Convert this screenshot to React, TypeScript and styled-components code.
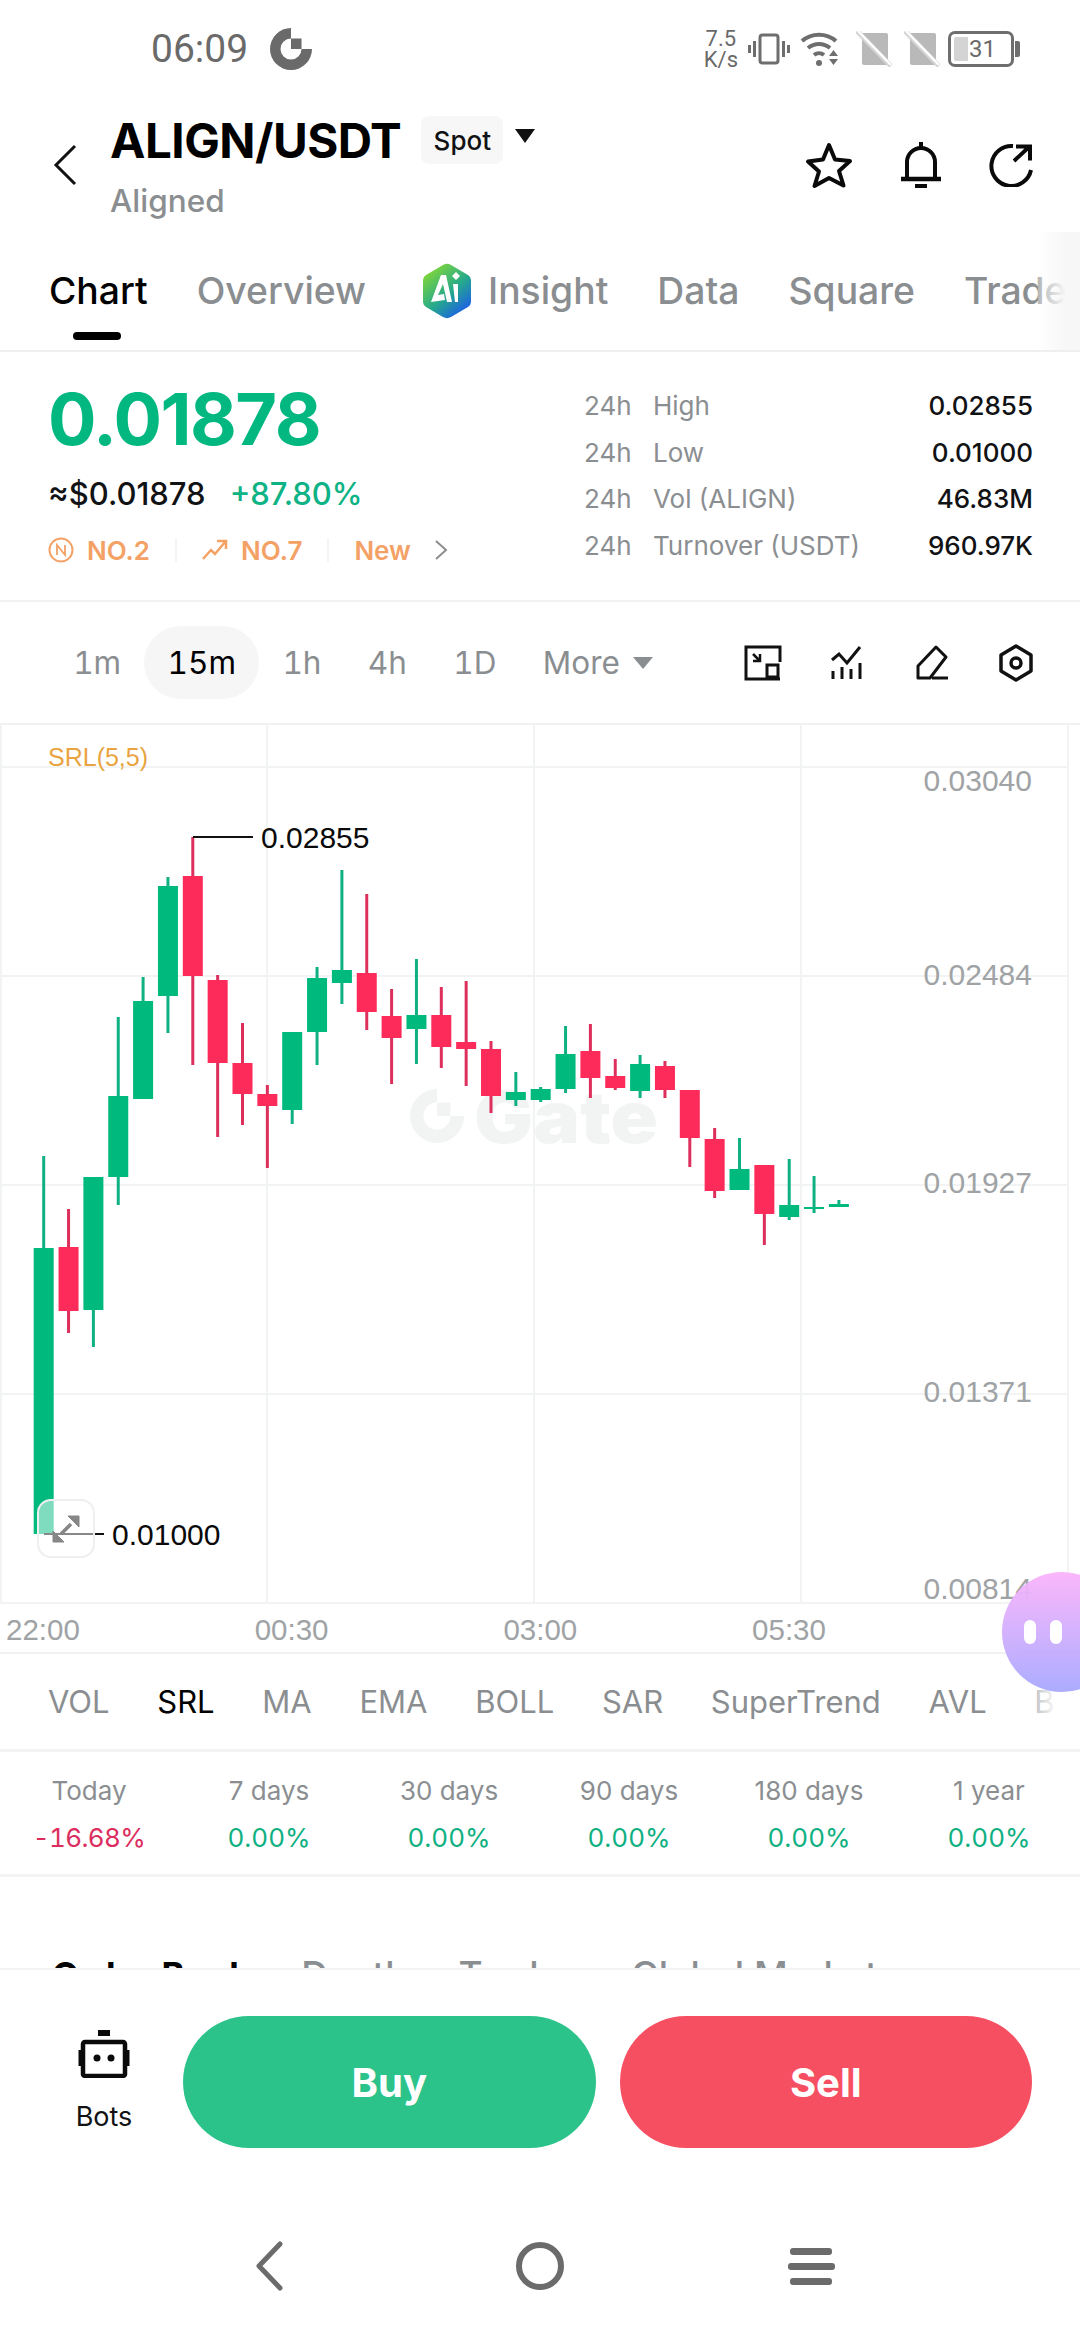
import { ReactElement } from "react";
import styled, { createGlobalStyle } from "styled-components";

const UI_FONT = `Inter, "Liberation Sans", sans-serif`;
const CHART_FONT = `"Liberation Sans", Arial, sans-serif`;

const TEXT = "#111214";
const GREY = "#8b8e91";
const GREEN = "#00b97c";
const RED = "#fc2b5a";
const ORANGE = "#f4a166";
const LINE = "#f2f3f3";

// [high, bodyTop, bodyBottom, low, up?] in page pixels, read off the screenshot
type Candle = [number, number, number, number, boolean];
const CANDLES: Candle[] = [
  [1156, 1248, 1534, 1534, true],
  [1209, 1247, 1311, 1333, false],
  [1177, 1177, 1310, 1347, true],
  [1017, 1096, 1177, 1205, true],
  [977, 1001, 1099, 1099, true],
  [877, 886, 996, 1033, true],
  [837, 876, 976, 1065, false],
  [975, 980, 1063, 1137, false],
  [1023, 1063, 1094, 1125, false],
  [1085, 1094, 1106, 1168, false],
  [1032, 1032, 1110, 1124, true],
  [967, 978, 1032, 1065, true],
  [870, 970, 983, 1004, true],
  [894, 973, 1012, 1030, false],
  [989, 1016, 1038, 1084, false],
  [959, 1015, 1029, 1064, true],
  [987, 1015, 1047, 1068, false],
  [981, 1042, 1049, 1086, false],
  [1041, 1049, 1096, 1113, false],
  [1072, 1092, 1100, 1106, true],
  [1087, 1089, 1100, 1102, true],
  [1026, 1054, 1089, 1093, true],
  [1024, 1051, 1078, 1098, false],
  [1059, 1076, 1088, 1090, false],
  [1055, 1064, 1091, 1098, true],
  [1061, 1066, 1090, 1098, false],
  [1090, 1090, 1138, 1167, false],
  [1128, 1139, 1191, 1198, false],
  [1138, 1169, 1190, 1190, true],
  [1165, 1165, 1214, 1245, false],
  [1159, 1205, 1217, 1220, true],
  [1176, 1207, 1209, 1213, true],
  [1200, 1204, 1207, 1207, true],
];

const TIMEFRAMES = ["1m", "15m", "1h", "4h", "1D"];
const INDICATORS = ["VOL", "SRL", "MA", "EMA", "BOLL", "SAR", "SuperTrend", "AVL", "BBI"];
const CHANGES = [
  { label: "Today", value: "-16.68%", down: true },
  { label: "7 days", value: "0.00%" },
  { label: "30 days", value: "0.00%" },
  { label: "90 days", value: "0.00%" },
  { label: "180 days", value: "0.00%" },
  { label: "1 year", value: "0.00%" },
];
const STATS = [
  { label: "High", value: "0.02855" },
  { label: "Low", value: "0.01000" },
  { label: "Vol (ALIGN)", value: "46.83M" },
  { label: "Turnover (USDT)", value: "960.97K" },
];
const PRICE_LABELS = [
  { y: 791, text: "0.03040" },
  { y: 985, text: "0.02484" },
  { y: 1193, text: "0.01927" },
  { y: 1402, text: "0.01371" },
  { y: 1599, text: "0.00814" },
];

function GateMark(props: { size: number; color: string }): ReactElement {
  return (
    <svg width={props.size} height={props.size} viewBox="0 0 44 44">
      <path
        d="M22 0a22 22 0 1 0 22 22H33a11 11 0 1 1-11-11z"
        fill={props.color}
      />
      <rect x="22" y="11" width="11" height="11" fill={props.color} />
    </svg>
  );
}

function StatusIcons(): ReactElement {
  return (
    <StatusRight>
      <NetSpeed>
        <span>7.5</span>
        <span>K/s</span>
      </NetSpeed>
      <svg width="42" height="32" viewBox="0 0 42 32" fill="none" stroke="#6e6e6e">
        <rect x="12" y="2" width="18" height="28" rx="2.5" strokeWidth="3" />
        <path d="M6.5 8v16M1.5 12v8M35.500 8v16M40.500 12v8" strokeWidth="3" />
      </svg>
      <WifiIcon width="40" height="36" viewBox="0 0 40 36" fill="none">
        <path d="M2 10a26 26 0 0 1 34 0M8 17a17 17 0 0 1 22 0M14 24a8 8 0 0 1 10 0" stroke="#6e6e6e" strokeWidth="4" />
        <circle cx="19" cy="32" r="3" fill="#6e6e6e" />
        <path d="M29 25h9l-4.500-6zM29 28h9l-4.500 6z" fill="#6e6e6e" />
      </WifiIcon>
      <SimIcon />
      <SimIcon />
      <Battery>
        <BatteryFill />
        <BatteryLevel>31</BatteryLevel>
      </Battery>
    </StatusRight>
  );
}

function SimIcon(): ReactElement {
  return (
    <SimSvg width="36" height="36" viewBox="0 0 36 36">
      <path d="M6 2h24a2 2 0 0 1 2 2v28a2 2 0 0 1-2 2H8a2 2 0 0 1-2-2z" fill="#b9b9b9" />
      <path d="M1 0l34 35" stroke="#d4d4d4" strokeWidth="5" />
      <path d="M2 0l33 34" stroke="#fff" strokeWidth="2.500" />
    </SimSvg>
  );
}

function Toolicons(): ReactElement {
  return (
    <ToolIcons>
      <svg width="38" height="36" viewBox="0 0 38 36" fill="none" stroke="#111" strokeWidth="3">
        <path d="M16 34H2V2h34v15" />
        <path d="M16 34h20" />
        <rect x="23" y="20" width="11" height="12" />
        <path d="M9 9l7 7M16 9v7H9" strokeWidth="2.500" />
      </svg>
      <svg width="36" height="36" viewBox="0 0 36 36" fill="none" stroke="#111" strokeWidth="3">
        <path d="M3 15l7-6 8 9 13-16" />
        <path d="M4 26v8M13 22v12M22 24v10M31 18v16" />
      </svg>
      <PencilIcon width="36" height="36" viewBox="0 0 36 36" fill="none" stroke="#111" strokeWidth="3">
        <path d="M3 33V21L21 2l10 10-16 21z" strokeLinejoin="round" />
        <path d="M17 33h16" />
      </PencilIcon>
      <svg width="36" height="38" viewBox="0 0 36 38" fill="none" stroke="#111" strokeWidth="3.500">
        <path d="M18 2l15 9v16l-15 9-15-9V11z" strokeLinejoin="round" />
        <circle cx="18" cy="19" r="5" />
      </svg>
    </ToolIcons>
  );
}

function ChartDrawing(): ReactElement {
  return (
    <ChartSvg viewBox="0 725 1080 879">
      {[767, 976, 1185, 1394, 1603].map((y) => (
        <line key={y} x1="1" x2={y === 1603 ? 1080 : 1068} y1={y} y2={y} stroke={LINE} strokeWidth="2" />
      ))}
      {[1, 267, 534, 801, 1068].map((x) => (
        <line key={x} x1={x} x2={x} y1="725" y2="1604" stroke={LINE} strokeWidth="2" />
      ))}
      <g transform="translate(410 1089)">
        <path d="M27 0a27 27 0 1 0 27 27H40.500A13.500 13.500 0 1 1 27 13.500z" fill="#f2f4f4" />
        <rect x="27" y="13.500" width="13.500" height="13.500" fill="#f2f4f4" />
      </g>
      <Watermark x="474" y="1143" textLength="184" lengthAdjust="spacingAndGlyphs">
        Gate
      </Watermark>
      {CANDLES.map(([high, top, bottom, low, up], i) => {
        const cx = 43.7 + i * 24.85;
        return (
          <g key={i}>
            <line
              x1={cx}
              x2={cx}
              y1={high}
              y2={low}
              stroke={up ? "#0fb082" : "#dc2f5c"}
              strokeWidth="3"
            />
            <rect x={cx - 10} y={top} width="20" height={bottom - top} fill={up ? GREEN : RED} />
          </g>
        );
      })}
      <line x1="193" x2="253" y1="837" y2="837" stroke="#111" strokeWidth="2" />
      <ExtremeLabel x="261" y="848">0.02855</ExtremeLabel>
      <IndicatorName x="48" y="766">SRL(5,5)</IndicatorName>
      {PRICE_LABELS.map((label) => (
        <PriceLabel key={label.text} x="1032" y={label.y}>
          {label.text}
        </PriceLabel>
      ))}
      <line x1="44" x2="104" y1="1534" y2="1534" stroke="#111" strokeWidth="2" />
      <ExtremeLabel x="112" y="1545">0.01000</ExtremeLabel>
    </ChartSvg>
  );
}

export default function App(): ReactElement {
  return (
    <Page>
      <GlobalStyle />
      <StatusBar>
        <Clock>06:09</Clock>
        <GateMark size={42} color="#6a6a6a" />
        <StatusIcons />
      </StatusBar>

      <Header>
        <BackButton width="24" height="42" viewBox="0 0 24 42" fill="none" stroke="#111" strokeWidth="3">
          <path d="M22 2L3 21l19 19" />
        </BackButton>
        <TitleBlock>
          <TitleRow>
            <Title>ALIGN/USDT</Title>
            <MarketChip>Spot</MarketChip>
            <Caret />
          </TitleRow>
          <Subtitle>Aligned</Subtitle>
        </TitleBlock>
        <HeaderActions>
          <svg width="48" height="48" viewBox="0 0 48 48" fill="none" stroke="#0a0a0a" strokeWidth="4" strokeLinejoin="round">
            <path d="M24 4l6 14.500 15 1.500-11 10 4.500 14.500L24 37 9.500 45 14 30.500 3 20.500l15-2z" />
          </svg>
          <svg width="44" height="50" viewBox="0 0 44 50" fill="none" stroke="#0a0a0a" strokeWidth="4">
            <path d="M8 39V22a14 14 0 0 1 28 0v17" />
            <path d="M2 39h40" strokeWidth="4.500" />
            <path d="M22 2v6" />
            <path d="M16 46h12" strokeWidth="4" />
          </svg>
          <svg width="44" height="44" viewBox="0 0 44 44" fill="none" stroke="#0a0a0a" strokeWidth="4">
            <path d="M24 3a20 20 0 1 0 18 24" />
            <path d="M25 18L40 4M27 3.500h14v14" />
          </svg>
        </HeaderActions>
      </Header>

      <Tabs>
        <Tab $active>Chart</Tab>
        <Tab>Overview</Tab>
        <InsightTab>
          <svg width="50" height="56" viewBox="0 0 50 56">
            <defs>
              <linearGradient id="ai" x1="0.150" y1="0.100" x2="0.800" y2="0.950">
                <stop offset="0" stopColor="#7fd63a" />
                <stop offset="0.550" stopColor="#25a98c" />
                <stop offset="1" stopColor="#1c5fe8" />
              </linearGradient>
            </defs>
            <path
              d="M21 2a8 8 0 0 1 8 0l17 10a6 6 0 0 1 3 5v22a6 6 0 0 1-3 5L29 54a8 8 0 0 1-8 0L4 44a6 6 0 0 1-3-5V17a6 6 0 0 1 3-5z"
              fill="url(#ai)"
            />
            <path d="M19 12h5l6 27h-5l-4-18-5 11 6-1 1 6-14 2z" fill="#fff" />
            <path d="M31 21h5v18h-3z" fill="#fff" />
            <path d="M34 9l4 4-4 4-4-4z" fill="#fff" />
          </svg>
          <Tab>Insight</Tab>
        </InsightTab>
        <Tab>Data</Tab>
        <Tab>Square</Tab>
        <Tab>Trade</Tab>
        <TabFade />
      </Tabs>

      <Stats>
        <PriceBlock>
          <Price>0.01878</Price>
          <PriceSub>
            <Fiat>≈$0.01878</Fiat>
            <Percent>+87.80%</Percent>
          </PriceSub>
          <Ranks>
            <svg width="26" height="26" viewBox="0 0 26 26" fill="none" stroke={ORANGE} strokeWidth="2">
              <circle cx="13" cy="13" r="11.500" />
              <path d="M9 18V8l8 10V8" strokeWidth="1.800" />
            </svg>
            <RankText>NO.2</RankText>
            <RankDivider />
            <svg width="26" height="22" viewBox="0 0 26 22" fill="none" stroke={ORANGE} strokeWidth="2.500">
              <path d="M1 20l8-9 4 4 10-12M15 2h9v8" />
            </svg>
            <RankText>NO.7</RankText>
            <RankDivider />
            <RankText>New</RankText>
            <RankChevron width="14" height="20" viewBox="0 0 14 20" fill="none" stroke="#8d8d8d" strokeWidth="2">
              <path d="M2 1l10 9-10 9" />
            </RankChevron>
          </Ranks>
        </PriceBlock>
        <StatTable>
          {STATS.map((stat) => (
            <StatRow key={stat.label}>
              <StatPeriod>24h</StatPeriod>
              <StatLabel>{stat.label}</StatLabel>
              <StatValue>{stat.value}</StatValue>
            </StatRow>
          ))}
        </StatTable>
      </Stats>

      <Toolbar>
        {TIMEFRAMES.map((frame) => (
          <Timeframe key={frame} $active={frame === "15m"}>
            {frame}
          </Timeframe>
        ))}
        <Timeframe>More</Timeframe>
        <MoreCaret />
        <Toolicons />
      </Toolbar>

      <Chart>
        <ChartDrawing />
        <ExpandButton>
          <svg width="30" height="30" viewBox="0 0 30 30" fill="#868686" stroke="#868686">
            <path d="M17 2h11v11z" strokeWidth="1" />
            <path d="M2 28V17l11 11z" strokeWidth="1" />
            <path d="M20 10L10 20" strokeWidth="3.500" />
          </svg>
        </ExpandButton>
      </Chart>

      <TimeAxis>
        {["22:00", "00:30", "03:00", "05:30"].map((time) => (
          <TimeLabel key={time}>{time}</TimeLabel>
        ))}
      </TimeAxis>

      <Indicators>
        {INDICATORS.map((name) => (
          <Indicator key={name} $active={name === "SRL"}>
            {name}
          </Indicator>
        ))}
        <IndicatorFade />
      </Indicators>

      <Changes>
        {CHANGES.map((change) => (
          <ChangeCell key={change.label}>
            <ChangeLabel>{change.label}</ChangeLabel>
            <ChangeValue $down={change.down}>{change.value}</ChangeValue>
          </ChangeCell>
        ))}
      </Changes>

      <MarketSection>
        <SectionTab $active>Order Book</SectionTab>
        <SectionTab>Depth</SectionTab>
        <SectionTab>Trades</SectionTab>
        <SectionTab>Global Market</SectionTab>
      </MarketSection>

      <ActionBar>
        <Bots>
          <svg width="52" height="48" viewBox="0 0 52 48" fill="none" stroke="#0a0a0a">
            <path d="M20 3h12" strokeWidth="6" />
            <rect x="5" y="12" width="42" height="34" rx="2" strokeWidth="4.500" />
            <path d="M2 20v16M50 20v16" strokeWidth="3" />
            <circle cx="19" cy="28" r="3.500" fill="#0a0a0a" stroke="none" />
            <circle cx="33" cy="28" r="3.500" fill="#0a0a0a" stroke="none" />
          </svg>
          <BotsLabel>Bots</BotsLabel>
        </Bots>
        <TradeButton $color="#2cc38a">Buy</TradeButton>
        <TradeButton $color="#f74f62">Sell</TradeButton>
      </ActionBar>

      <NavBar>
        <svg width="28" height="50" viewBox="0 0 28 50" fill="none" stroke="#6b6b6b" strokeWidth="5" strokeLinecap="round" strokeLinejoin="round">
          <path d="M25 3L4 25l21 22" />
        </svg>
        <svg width="50" height="50" viewBox="0 0 50 50" fill="none" stroke="#6b6b6b" strokeWidth="6">
          <circle cx="25" cy="25" r="21" />
        </svg>
        <MenuBars>
          <MenuBar $width={42} />
          <MenuBar $width={47} />
          <MenuBar $width={42} />
        </MenuBars>
      </NavBar>

      <Mascot>
        <MascotEye />
        <MascotEye />
      </Mascot>
    </Page>
  );
}

const GlobalStyle = createGlobalStyle`
  html, body {
    margin: 0;
    padding: 0;
    background: #fff;
  }
  * {
    box-sizing: border-box;
  }
`;

const Page = styled.div`
  position: relative;
  width: 1080px;
  height: 2340px;
  overflow: hidden;
  background: #fff;
  font-family: ${UI_FONT};
  color: ${TEXT};
`;

const StatusBar = styled.div`
  display: flex;
  align-items: center;
  height: 100px;
  padding: 0 60px 2px 151px;
`;

const Clock = styled.span`
  margin-right: 22px;
  font-family: Roboto, sans-serif;
  font-size: 39px;
  color: #6a6a6a;
`;

const StatusRight = styled.div`
  display: flex;
  align-items: center;
  gap: 10px;
  margin-left: auto;
`;

const NetSpeed = styled.div`
  display: flex;
  flex-direction: column;
  align-items: center;
  font-family: Roboto, sans-serif;
  font-size: 22px;
  line-height: 21px;
  color: #6a6a6a;
`;

const WifiIcon = styled.svg`
  margin-right: 4px;
`;

const SimSvg = styled.svg`
  margin-left: 2px;
`;

const Battery = styled.div`
  position: relative;
  display: flex;
  align-items: center;
  width: 66px;
  height: 36px;
  margin: 0 6px 0 -2px;
  border: 3px solid #6e6e6e;
  border-radius: 7px;
  padding-left: 3px;

  &::after {
    content: "";
    position: absolute;
    right: -9px;
    top: 7px;
    width: 5px;
    height: 16px;
    background: #6e6e6e;
    border-radius: 0 2px 2px 0;
  }
`;

const BatteryFill = styled.div`
  width: 14px;
  height: 24px;
  background: #d4d4d4;
  border-radius: 2px 0 0 2px;
`;

const BatteryLevel = styled.span`
  margin-left: 1px;
  font-family: Roboto, sans-serif;
  font-size: 24px;
  color: #6a6a6a;
`;

const Header = styled.div`
  display: flex;
  height: 132px;
  padding: 12px 47px 0 53px;
`;

const BackButton = styled.svg`
  margin-top: 32px;
`;

const TitleBlock = styled.div`
  display: flex;
  flex-direction: column;
  margin-left: 33px;
`;

const TitleRow = styled.div`
  display: flex;
  align-items: center;
  height: 56px;
`;

const Title = styled.div`
  font-size: 47.500px;
  font-weight: 700;
  letter-spacing: -0.5px;
  color: #000;
`;

const MarketChip = styled.div`
  display: flex;
  align-items: center;
  justify-content: center;
  width: 82px;
  height: 48px;
  margin-left: 20px;
  border-radius: 8px;
  background: #f7f7f7;
  font-size: 26px;
  font-weight: 500;
`;

const Caret = styled.div`
  width: 0;
  height: 0;
  margin: -8px 0 0 12px;
  border-left: 10px solid transparent;
  border-right: 10px solid transparent;
  border-top: 14px solid #111;
`;

const Subtitle = styled.div`
  margin-top: 13px;
  font-size: 31.500px;
  font-weight: 500;
  line-height: 40px;
  color: ${GREY};
`;

const HeaderActions = styled.div`
  display: flex;
  align-items: center;
  gap: 46px;
  height: 50px;
  margin: 28px 0 0 auto;
`;

const Tabs = styled.div`
  position: relative;
  display: flex;
  gap: 49px;
  height: 120px;
  padding: 36px 0 0 49px;
  border-bottom: 2px solid #efefef;
  overflow: hidden;
`;

const Tab = styled.div<{ $active?: boolean }>`
  position: relative;
  flex-shrink: 0;
  height: 46px;
  font-size: 37.300px;
  font-weight: 500;
  line-height: 46px;
  color: ${(props) => (props.$active ? "#000" : GREY)};

  ${(props) =>
    props.$active &&
    `
    &::after {
      content: "";
      position: absolute;
      left: 24px;
      bottom: -26px;
      width: 48px;
      height: 8px;
      border-radius: 4px;
      background: #000;
    }
  `}
`;

const InsightTab = styled.div`
  display: flex;
  align-items: center;
  gap: 16px;
  flex-shrink: 0;
  margin-left: 7px;
  height: 46px;
`;

const TabFade = styled.div`
  position: absolute;
  top: 0;
  right: 0;
  bottom: 0;
  width: 42px;
  background: linear-gradient(90deg, rgba(255, 255, 255, 0.35), rgba(247, 247, 247, 0.95) 60%);
`;

const Stats = styled.div`
  display: flex;
  height: 250px;
  border-bottom: 2px solid #f1f1f1;
`;

const PriceBlock = styled.div`
  width: 584px;
  padding: 32px 0 0 48px;
`;

const Price = styled.div`
  font-size: 72px;
  font-weight: 700;
  line-height: 70px;
  letter-spacing: -1.5px;
  color: #02b880;
`;

const PriceSub = styled.div`
  display: flex;
  align-items: center;
  gap: 24px;
  height: 40px;
  margin-top: 19px;
`;

const Fiat = styled.span`
  font-size: 31px;
  font-weight: 500;
  color: ${TEXT};
`;

const Percent = styled.span`
  font-size: 31px;
  font-weight: 500;
  color: #0db285;
`;

const Ranks = styled.div`
  display: flex;
  align-items: center;
  gap: 13px;
  height: 40px;
  margin-top: 17px;
`;

const RankText = styled.span`
  font-size: 26px;
  font-weight: 600;
  color: ${ORANGE};
`;

const RankDivider = styled.div`
  width: 2px;
  height: 24px;
  margin: 0 12px;
  background: #f4f4f4;
`;

const RankChevron = styled.svg`
  margin-left: 10px;
`;

const StatTable = styled.div`
  flex: 1;
  padding: 30px 47px 0 0;
`;

const StatRow = styled.div`
  display: flex;
  align-items: center;
  height: 46.7px;
  font-size: 26px;
`;

const StatPeriod = styled.span`
  width: 69px;
  color: ${GREY};
`;

const StatLabel = styled.span`
  color: ${GREY};
`;

const StatValue = styled.span`
  margin-left: auto;
  font-weight: 500;
  color: ${TEXT};
`;

const Toolbar = styled.div`
  display: flex;
  align-items: center;
  height: 121px;
  padding: 0 46px 0 50px;
`;

const Timeframe = styled.div<{ $active?: boolean }>`
  height: 73px;
  padding: 0 23.200px;
  border-radius: 37px;
  background: ${(props) => (props.$active ? "#f6f6f6" : "transparent")};
  font-size: 31.500px;
  font-feature-settings: "tnum";
  line-height: 73px;
  color: ${(props) => (props.$active ? "#000" : GREY)};
`;

const MoreCaret = styled.div`
  width: 0;
  height: 0;
  margin-left: -10px;
  border-left: 10px solid transparent;
  border-right: 10px solid transparent;
  border-top: 12px solid ${GREY};
`;

const ToolIcons = styled.div`
  display: flex;
  align-items: center;
  gap: 47px;
  margin-left: auto;
`;

const PencilIcon = styled.svg`
  margin-left: 3px;
`;

const Chart = styled.div`
  position: relative;
  height: 881px;
  border-top: 2px solid #f1f1f1;
`;

const ChartSvg = styled.svg`
  display: block;
  width: 1080px;
  height: 879px;
`;

const Watermark = styled.text`
  font-family: ${UI_FONT};
  font-size: 72px;
  font-weight: 900;
  fill: #f2f4f4;
`;

const ExtremeLabel = styled.text`
  font-family: ${CHART_FONT};
  font-size: 30px;
  fill: #0a0a0a;
`;

const PriceLabel = styled.text`
  font-family: ${CHART_FONT};
  font-size: 30px;
  text-anchor: end;
  fill: #a0a3a5;
`;

const IndicatorName = styled.text`
  font-family: ${CHART_FONT};
  font-size: 25px;
  fill: #e9a441;
`;

const ExpandButton = styled.div`
  position: absolute;
  left: 37px;
  top: 774px;
  display: flex;
  align-items: center;
  justify-content: center;
  width: 58px;
  height: 59px;
  border: 2px solid #efefef;
  border-radius: 14px;
  background: rgba(255, 255, 255, 0.5);
`;

const TimeAxis = styled.div`
  display: flex;
  align-items: center;
  height: 50px;
  padding: 4px 0 0 6px;
  border-bottom: 2px solid #f1f1f1;
`;

const TimeLabel = styled.span`
  width: 248.700px;
  font-family: ${CHART_FONT};
  font-size: 29.500px;
  color: #a0a3a5;
`;

const Indicators = styled.div`
  position: relative;
  display: flex;
  align-items: center;
  gap: 47.700px;
  height: 98px;
  padding-left: 48px;
  border-bottom: 3px solid #f3f3f3;
  overflow: hidden;
`;

const Indicator = styled.span<{ $active?: boolean }>`
  flex-shrink: 0;
  font-size: 31px;
  color: ${(props) => (props.$active ? "#000" : GREY)};
`;

const IndicatorFade = styled.div`
  position: absolute;
  top: 0;
  right: 0;
  bottom: 0;
  width: 50px;
  background: linear-gradient(90deg, rgba(255, 255, 255, 0.35), #fff 55%);
`;

const Changes = styled.div`
  display: grid;
  grid-template-columns: repeat(6, 180px);
  height: 125px;
  margin-left: -1px;
  padding-top: 21px;
  border-bottom: 3px solid #f3f3f3;
`;

const ChangeCell = styled.div`
  display: flex;
  flex-direction: column;
  align-items: center;
  gap: 11px;
`;

const ChangeLabel = styled.span`
  font-size: 26px;
  line-height: 36px;
  color: ${GREY};
`;

const ChangeValue = styled.span<{ $down?: boolean }>`
  font-size: 26px;
  font-feature-settings: "tnum";
  letter-spacing: ${(props) => (props.$down ? "-0.6px" : "0")};
  line-height: 36px;
  color: ${(props) => (props.$down ? "#dc2d5e" : "#0fb082")};
`;

const MarketSection = styled.div`
  display: flex;
  align-items: baseline;
  gap: 51px;
  height: 91px;
  padding: 76px 0 0 52px;
  overflow: hidden;
`;

const SectionTab = styled.div<{ $active?: boolean }>`
  flex-shrink: 0;
  font-size: ${(props) => (props.$active ? 35 : 37)}px;
  font-weight: ${(props) => (props.$active ? 700 : 500)};
  letter-spacing: ${(props) => (props.$active ? "0.6px" : "0")};
  line-height: 44px;
  color: ${(props) => (props.$active ? "#000" : GREY)};
`;

const ActionBar = styled.div`
  display: flex;
  gap: 24px;
  height: 180px;
  padding: 46px 48px 0 49px;
  border-top: 2px solid #f2f3f3;
`;

const Bots = styled.div`
  display: flex;
  flex-direction: column;
  align-items: center;
  width: 110px;
  padding-top: 14px;
`;

const BotsLabel = styled.span`
  margin-top: 21px;
  font-size: 27px;
  line-height: 36px;
  color: ${TEXT};
`;

const TradeButton = styled.div<{ $color: string }>`
  display: flex;
  align-items: center;
  justify-content: center;
  width: 412.500px;
  height: 132px;
  border-radius: 66px;
  background: ${(props) => props.$color};
  font-size: 40px;
  font-weight: 700;
  color: #fff;
`;

const NavBar = styled.div`
  display: grid;
  grid-template-columns: repeat(3, 271px);
  justify-content: center;
  justify-items: center;
  align-items: center;
  height: 50px;
  margin-top: 93px;
`;

const MenuBars = styled.div`
  display: flex;
  flex-direction: column;
  align-items: center;
  gap: 8px;
`;

const MenuBar = styled.div<{ $width: number }>`
  width: ${(props) => props.$width}px;
  height: 7px;
  border-radius: 3px;
  background: #6b6b6b;
`;

const Mascot = styled.div`
  position: absolute;
  left: 1002px;
  top: 1572px;
  display: flex;
  align-items: center;
  gap: 14px;
  width: 120px;
  height: 120px;
  padding-left: 22px;
  border-radius: 50%;
  background: linear-gradient(180deg, #fbb4fb, #a8a8ff);
  opacity: 0.95;
`;

const MascotEye = styled.div`
  width: 12px;
  height: 24px;
  border-radius: 6px;
  background: #fff;
`;
